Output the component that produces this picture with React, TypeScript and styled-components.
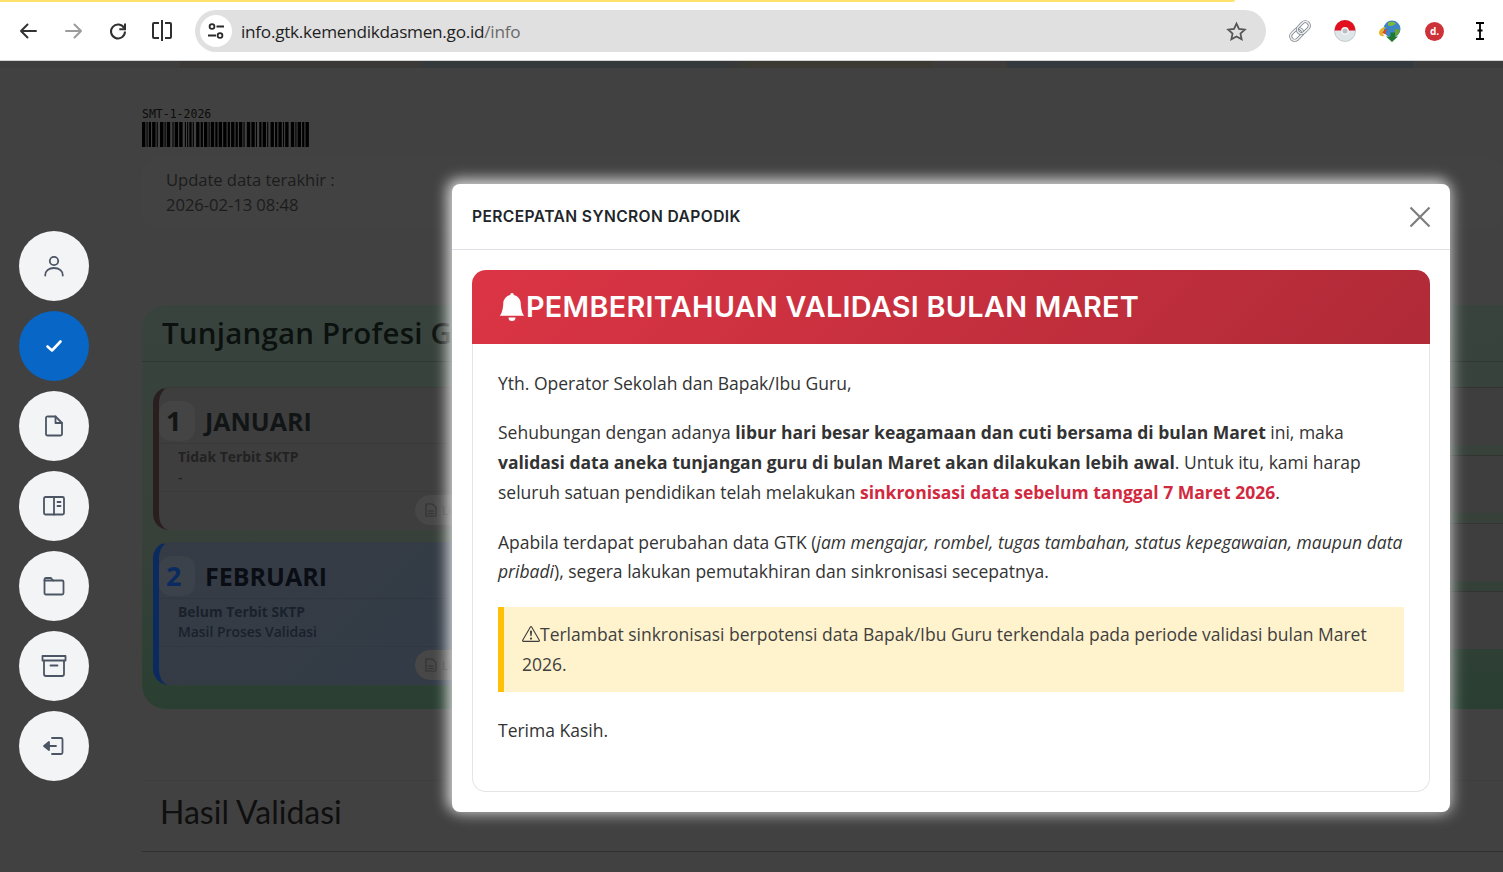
import React from "react";
import styled, { createGlobalStyle } from "styled-components";
import { BsBellFill, BsExclamationTriangle } from "react-icons/bs";

const Global = createGlobalStyle`
  html, body { margin: 0; padding: 0; background: #414141; }
  * { box-sizing: border-box; }
  body { font-family: "Open Sans", "Noto Sans", sans-serif; }
`;

const Page = styled.div`
  position: relative;
  width: 1503px;
  height: 872px;
  overflow: hidden;
  background: #414141;
  display: flex;
  flex-direction: column;
`;

const LoadBar = styled.div`
  position: absolute;
  left: 0;
  top: 0;
  width: 1235px;
  height: 2px;
  background: #ffe26b;
  border-radius: 0 0 4px 0;
`;

const Toolbar = styled.header`
  flex: none;
  height: 61px;
  background: #fff;
  border-bottom: 1px solid #d4d4d4;
  display: flex;
  align-items: center;
  padding: 2px 1px 0 6px;
`;

const NavSlot = styled.div`
  width: 44px;
  height: 40px;
  flex: none;
  display: flex;
  align-items: center;
  justify-content: center;
  &:nth-of-type(3) { margin-left: 2px; }
`;

const Omnibox = styled.div`
  flex: 1;
  height: 42px;
  margin-left: 11px;
  border-radius: 21px;
  background: #e0e0e0;
  display: flex;
  align-items: center;
  padding: 0 19px 0 5px;
`;

const TuneBadge = styled.div`
  width: 32px;
  height: 32px;
  flex: none;
  border-radius: 50%;
  background: #fff;
  display: flex;
  align-items: center;
  justify-content: center;
`;

const Url = styled.div`
  flex: 1;
  margin-left: 9px;
  font-size: 17.2px;
  letter-spacing: -0.27px;
  color: #1f1f1f;
  span { color: #6a6a6a; }
`;

const ExtensionRow = styled.div`
  display: flex;
  margin-left: 11px;
  flex: none;
`;

const ExtSlot = styled.div`
  width: 45px;
  height: 40px;
  display: flex;
  align-items: center;
  justify-content: center;
`;

const RedBadge = styled.div`
  width: 19px;
  height: 19px;
  border-radius: 50%;
  background: #cc3237;
  color: #fff;
  font-size: 10px;
  font-weight: 700;
  line-height: 19px;
  text-align: center;
`;

const PageStrip = styled.div`
  flex: none;
  height: 7px;
  background: linear-gradient(90deg, #3d3d3d 0 12%, #3a3938 12% 28%, #34393c 28% 48%, #3c3a33 50% 62%, #3d3c3b 62% 67%, #33393e 67% 94%, #3c3c3c 94% 100%);
`;

const Body = styled.div`
  flex: 1;
  display: flex;
  min-height: 0;
`;

const Sidebar = styled.nav`
  width: 142px;
  flex: none;
  display: flex;
  flex-direction: column;
  gap: 10px;
  padding: 163px 0 0 19px;
`;

const RoundButton = styled.div<{ $active?: boolean }>`
  width: 70px;
  height: 70px;
  border-radius: 50%;
  background: ${(p) => (p.$active ? "#0866c6" : "#f3f4f6")};
  color: ${(p) => (p.$active ? "#ffffff" : "#4b5563")};
  display: flex;
  align-items: center;
  justify-content: center;
`;

const Main = styled.main`
  flex: 1;
  min-width: 0;
  padding-top: 39px;
  display: flex;
  flex-direction: column;
`;

const BarcodeBlock = styled.div`
  height: 50px;
  display: flex;
  flex-direction: column;
`;

const BarcodeLabel = styled.div`
  font-family: "DejaVu Sans Mono", monospace;
  font-size: 11.5px;
  line-height: 15px;
  color: #0c0c0c;
`;

const UpdateCard = styled.div`
  height: 73px;
  padding: 10px 24px;
  border-radius: 16px;
  background: #424242;
  font-size: 16.6px;
  font-weight: 500;
  line-height: 25px;
  letter-spacing: -0.05px;
  color: #1c1c1c;
`;

const GreenPanel = styled.section`
  margin-top: 75px;
  height: 404px;
  border-radius: 24px 0 0 24px;
  background: linear-gradient(180deg, #39433e 0%, #374139 60%, #2a3f32 100%);
`;

const PanelHeader = styled.div`
  height: 57px;
  padding: 8px 20px 0;
  border-bottom: 1px solid #2f3532;
  font-size: 29.5px;
  font-weight: 600;
  line-height: 40px;
  letter-spacing: 0.2px;
  color: #0b110e;
  white-space: nowrap;
`;

const PanelGrid = styled.div`
  display: grid;
  grid-template-columns: 640px 1fr;
  gap: 10px;
  padding: 25px 0 0 11px;
  margin-right: -24px;
`;

const Column = styled.div<{ $gap: number }>`
  display: flex;
  flex-direction: column;
  gap: ${(p) => p.$gap}px;
`;

const MonthCard = styled.div<{ $tone: "done" | "active" }>`
  position: relative;
  height: 143px;
  border-radius: 16px;
  border-left: 6px solid ${(p) => (p.$tone === "done" ? "#2a1f1f" : "#0a2a60")};
  background: ${(p) => (p.$tone === "done" ? "#3e3e3e" : "linear-gradient(135deg, #363c45, #2f3a47)")};
  border-top: 1px solid ${(p) => (p.$tone === "done" ? "#383838" : "#333b45")};
`;

const MonthHead = styled.div`
  height: 56px;
  padding-top: 10px;
  display: flex;
  align-items: center;
  border-bottom: 1px solid rgba(0, 0, 0, 0.07);
`;

const NumberBadge = styled.div<{ $tone: "done" | "active" }>`
  width: 36px;
  height: 40px;
  margin-right: 10px;
  border-radius: 12px;
  background: rgba(255, 255, 255, 0.03);
  font-size: 27px;
  font-weight: 700;
  line-height: 40px;
  padding-left: 7px;
  color: ${(p) => (p.$tone === "done" ? "#141414" : "#0a2a60")};
`;

const MonthName = styled.div<{ $tone: "done" | "active" }>`
  font-size: 25px;
  font-weight: 700;
  color: ${(p) => (p.$tone === "done" ? "#111515" : "#0a0e14")};
`;

const MonthBody = styled.div<{ $tone: "done" | "active" }>`
  padding: 3px 0 0 19px;
  height: 44px;
  box-sizing: content-box;
  font-size: 13.9px;
  line-height: 20px;
  color: ${(p) => (p.$tone === "done" ? "#222" : "#1a212b")};
  border-bottom: 1px solid rgba(0, 0, 0, 0.05);
  b { font-weight: 700; display: block; }
  span { font-weight: 600; }
`;

const LinkPill = styled.div`
  position: absolute;
  left: 256px;
  bottom: 5px;
  display: flex;
  align-items: center;
  gap: 5px;
  width: 110px;
  height: 30px;
  padding-left: 10px;
  border-radius: 15px;
  background: #474747;
  font-size: 12px;
  color: #333;
`;

const SideCard = styled.div`
  height: 58px;
  border-radius: 12px;
  background: #3e3e3e;
  border-top: 1px solid #333;
`;

const ResultSection = styled.section`
  margin-top: 71px;
  border-top: 1px solid #3e3e3e;
`;

const ResultTitle = styled.h2`
  margin: 0;
  height: 71px;
  padding: 9px 18px 0;
  border-bottom: 1px solid #303030;
  font-family: "Lato", sans-serif;
  font-size: 32px;
  font-weight: 400;
  line-height: 44px;
  color: #0f0f0f;
`;

const Modal = styled.div`
  position: absolute;
  left: 452px;
  top: 184px;
  width: 998px;
  height: 628px;
  background: #fff;
  border-radius: 8px;
  box-shadow: -3px -3px 14px 2px rgba(255, 255, 255, 0.72), 3px 3px 16px 1px rgba(255, 255, 255, 0.24);
  display: flex;
  flex-direction: column;
`;

const ModalHeader = styled.div`
  flex: none;
  height: 66px;
  padding: 0 19px 0 20px;
  border-bottom: 1px solid #dee2e6;
  display: flex;
  align-items: center;
  justify-content: space-between;
`;

const ModalTitle = styled.h5`
  margin: 0;
  font-family: "Inter", sans-serif;
  font-size: 15.6px;
  font-weight: 600;
  letter-spacing: 0.4px;
  color: #212529;
`;

const ModalBody = styled.div`
  flex: 1;
  padding: 20px;
  display: flex;
`;

const Notice = styled.article`
  flex: 1;
  display: flex;
  flex-direction: column;
`;

const NoticeHead = styled.div`
  flex: none;
  height: 74px;
  padding: 0 26px 1px;
  border-radius: 14px 14px 0 0;
  display: flex;
  align-items: center;
  background: linear-gradient(135deg, #dc3545, #b02a37);
  color: #fff;
  font-family: "Inter", sans-serif;
  font-size: 28.8px;
  font-weight: 600;
  letter-spacing: 0.3px;
`;

const NoticeText = styled.div`
  flex: 1;
  padding: 24.5px 25px 0;
  border: 1px solid #e2e4e6;
  border-top: 0;
  border-radius: 0 0 14px 14px;
  font-size: 17.5px;
  line-height: 29.75px;
  color: #333;
  p { margin: 0 0 20px; }
  strong { font-weight: 700; }
  em { font-style: italic; }
`;

const Danger = styled.strong`
  color: #d1293f;
`;

const WarningBox = styled.div`
  margin: 0.5px 0 24px;
  padding: 13px 18px 12.5px;
  background: #fff3cd;
  border-left: 6px solid #ffc107;
  color: #3f3f3f;
`;

const bars = [3,1,1,1,2,1,3,1,1,2,3,1,1,1,3,2,1,1,3,1,3,2,1,1,1,1,2,1,1,2,3,1,2,1,3,1,1,1,3,1,2,1,3,1,3,1,2,1,3,1,2,1,3,1,1,2,3,1,3,1,1,2,2,1,3,1,1,2,3,1,2,1,3,1,1,1,3,2,3,1,1,1,3,1,2,1,3,1];

function Barcode() {
  let x = 0;
  const rects: React.ReactElement[] = [];
  bars.forEach((w, i) => {
    if (i % 2 === 0) rects.push(<rect key={i} x={x} y={0} width={w} height={25} fill="#000" />);
    x += w;
  });
  return (
    <svg width={168} height={25} viewBox={`0 0 ${x} 25`} preserveAspectRatio="none">
      {rects}
    </svg>
  );
}

const line = { fill: "none", stroke: "currentColor", strokeWidth: 1.8, strokeLinecap: "round", strokeLinejoin: "round" } as const;

const SideIcons = {
  user: (
    <svg width="24" height="24" viewBox="0 0 24 24" {...line}>
      <circle cx="12" cy="7" r="4.2" />
      <path d="M3.2 21.5c0-4.8 3.8-7.5 8.8-7.5s8.8 2.7 8.8 7.5" />
    </svg>
  ),
  check: (
    <svg width="20" height="20" viewBox="0 0 20 20" fill="none" stroke="currentColor" strokeWidth="2.6" strokeLinecap="round" strokeLinejoin="round">
      <path d="M3.5 10.5 8 14.5 16.5 5.5" />
    </svg>
  ),
  file: (
    <svg width="24" height="24" viewBox="0 0 24 24" {...line}>
      <path d="M6 2.5h7.5L20 9v11a1.5 1.5 0 0 1-1.5 1.5h-13A1.5 1.5 0 0 1 4 20V4a1.5 1.5 0 0 1 2-1.5Z" />
      <path d="M13.5 2.5V9H20" />
    </svg>
  ),
  book: (
    <svg width="24" height="24" viewBox="0 0 24 24" {...line}>
      <rect x="2" y="3" width="20" height="17.5" rx="1.5" />
      <path d="M12 3v17.5M15.5 8h3M15.5 12h3" />
    </svg>
  ),
  folder: (
    <svg width="24" height="24" viewBox="0 0 24 24" {...line}>
      <path d="M2.5 5.5A1.5 1.5 0 0 1 4 4h5l2 2.5h9A1.5 1.5 0 0 1 21.5 8v11a1.5 1.5 0 0 1-1.5 1.5H4A1.5 1.5 0 0 1 2.5 19Z" />
      <path d="M2.5 6.5h8.5" />
    </svg>
  ),
  archive: (
    <svg width="26" height="26" viewBox="0 0 26 26" {...line}>
      <path d="M1.5 3h23v4.5h-23ZM3 7.5V21a2 2 0 0 0 2 2h16a2 2 0 0 0 2-2V7.5M9.5 12.5h7" />
    </svg>
  ),
  logout: (
    <svg width="24" height="24" viewBox="0 0 24 24" {...line}>
      <path d="M10 4h9a1.5 1.5 0 0 1 1.5 1.5v13A1.5 1.5 0 0 1 19 20h-9" />
      <path d="M14 12H6" />
      <path d="M7 8v8l-5-4Z" fill="currentColor" />
    </svg>
  ),
};

const navStroke = { fill: "none", stroke: "currentColor", strokeWidth: 2, strokeLinecap: "round", strokeLinejoin: "round" } as const;

const Back = ({ color }: { color: string }) => (
  <svg width="20" height="20" viewBox="0 0 20 20" style={{ color }} {...navStroke}>
    <path d="M18 10H3M9.5 3.500 3 10l6.500 6.500" />
  </svg>
);
const Forward = ({ color }: { color: string }) => (
  <svg width="20" height="20" viewBox="0 0 20 20" style={{ color }} {...navStroke}>
    <path d="M2 10h15M10.500 3.500 17 10l-6.500 6.500" />
  </svg>
);

const Reload = () => (
  <svg width="20" height="20" viewBox="0 0 20 20" fill="none" stroke="#2f2f2f" strokeWidth="2">
    <path d="M16.200 7.200A7 7 0 1 0 17 10.500" />
    <path d="M17 2.500v5.700h-5.700" strokeLinejoin="miter" />
  </svg>
);

const Split = () => (
  <svg width="22" height="22" viewBox="0 0 22 22" fill="none" stroke="#2f2f2f" strokeWidth="2">
    <path d="M8 3H3a1 1 0 0 0-1 1v13a1 1 0 0 0 1 1h5M14 3h5a1 1 0 0 1 1 1v13a1 1 0 0 1-1 1h-5M11 0v21" />
  </svg>
);

const Tune = () => (
  <svg width="20" height="20" viewBox="0 0 20 20" fill="none" stroke="#2a2a2a" strokeWidth="1.800">
    <circle cx="6" cy="5.500" r="2.400" />
    <circle cx="14" cy="14.500" r="2.400" />
    <path d="M10.500 5.500H18M2 14.500h8" />
  </svg>
);

const Star = () => (
  <svg width="21" height="21" viewBox="0 0 24 24" fill="none" stroke="#555" strokeWidth="2" strokeLinejoin="miter">
    <path d="m12 3 2.800 6.100 6.700.8-5 4.500 1.400 6.600-5.900-3.400L6.100 21l1.400-6.600-5-4.500 6.700-.8Z" />
  </svg>
);

const ChainIcon = () => (
  <svg width="24" height="24" viewBox="0 0 24 24" fill="none">
    <g transform="rotate(-45 12 12)">
      <rect x="0.500" y="8" width="13.500" height="8" rx="4" stroke="#6f7a83" strokeWidth="3" />
      <rect x="0.500" y="8" width="13.500" height="8" rx="4" stroke="#eceeef" strokeWidth="1.700" />
      <rect x="10" y="8" width="13.500" height="8" rx="4" stroke="#6f7a83" strokeWidth="3" />
      <rect x="10" y="8" width="13.500" height="8" rx="4" stroke="#eceeef" strokeWidth="1.700" />
    </g>
  </svg>
);

const PokeBall = () => (
  <svg width="22" height="22" viewBox="0 0 22 22">
    <circle cx="11" cy="11" r="10.500" fill="#dfe6ea" stroke="#a9b1b6" strokeWidth="0.600" />
    <path d="M0.500 10.500a10.500 10.500 0 0 1 21 0Z" fill="#e20f1f" />
    <circle cx="11" cy="11" r="3.200" fill="#b9c0c4" stroke="#f4f4f4" strokeWidth="1.400" />
  </svg>
);

const IdmIcon = () => (
  <svg width="24" height="24" viewBox="0 0 24 24">
    <circle cx="14" cy="10" r="8.500" fill="#3d86c6" />
    <path d="M10 3.500c3-1.500 6-1 8 1-2 2-5 3-8 2Z" fill="#7fb83c" />
    <path d="M17 10c2 0 4 .5 5 1-.5 3-2 5-4 6-1-2-1.500-4-1-7Z" fill="#6aa332" />
    <path d="M1 14c0-3 3-6 7-6-2 2-3 4-3 6 0 2 1 3 2 3-3 1-6-.5-6-3Z" fill="#e5b62c" />
    <path d="M4.500 13.500c1-2 3-3.500 5-3.500-1.500 1.500-2 3-1.500 5-1.500 0-3-.5-3.500-1.500Z" fill="#d8482e" />
    <path d="M8 17.500h4.500v-4h4.500v4h3L14 23Z" fill="#1f7a2f" />
  </svg>
);

const IBeam = () => (
  <svg width="12" height="22" viewBox="0 0 12 22" fill="none" stroke="#000" strokeWidth="1.800">
    <path d="M2 3h8M2 19h8M6 3v16M3.500 10.500h5" />
  </svg>
);

const CloseIcon = () => (
  <svg width="22" height="22" viewBox="0 0 22 22" fill="none" stroke="#7d7d7d" strokeWidth="2.200">
    <path d="M1.500 1.500l19 19M20.500 1.500l-19 19" />
  </svg>
);

const SmallFile = () => (
  <svg width="12" height="14" viewBox="0 0 12 14" fill="none" stroke="#333" strokeWidth="1.200">
    <path d="M1 1h6.500L11 4.500V13H1Z" />
    <path d="M3 8h6M3 10.500h6" />
  </svg>
);

export default function App() {
  return (
    <Page>
      <Global />
      <Toolbar>
        <LoadBar />
        <NavSlot><Back color="#333" /></NavSlot>
        <NavSlot><Forward color="#9c9c9c" /></NavSlot>
        <NavSlot><Reload /></NavSlot>
        <NavSlot><Split /></NavSlot>
        <Omnibox>
          <TuneBadge><Tune /></TuneBadge>
          <Url>info.gtk.kemendikdasmen.go.id<span>/info</span></Url>
          <Star />
        </Omnibox>
        <ExtensionRow>
          <ExtSlot><ChainIcon /></ExtSlot>
          <ExtSlot><PokeBall /></ExtSlot>
          <ExtSlot><IdmIcon /></ExtSlot>
          <ExtSlot><RedBadge>d.</RedBadge></ExtSlot>
          <ExtSlot><IBeam /></ExtSlot>
        </ExtensionRow>
      </Toolbar>
      <PageStrip />
      <Body>
        <Sidebar>
          <RoundButton>{SideIcons.user}</RoundButton>
          <RoundButton $active>{SideIcons.check}</RoundButton>
          <RoundButton>{SideIcons.file}</RoundButton>
          <RoundButton>{SideIcons.book}</RoundButton>
          <RoundButton>{SideIcons.folder}</RoundButton>
          <RoundButton>{SideIcons.archive}</RoundButton>
          <RoundButton>{SideIcons.logout}</RoundButton>
        </Sidebar>
        <Main>
          <BarcodeBlock>
            <BarcodeLabel>SMT-1-2026</BarcodeLabel>
            <Barcode />
          </BarcodeBlock>
          <UpdateCard>
            Update data terakhir :<br />2026-02-13 08:48
          </UpdateCard>
          <GreenPanel>
            <PanelHeader>Tunjangan Profesi Guru</PanelHeader>
            <PanelGrid>
              <Column $gap={12}>
                <MonthCard $tone="done">
                  <MonthHead>
                    <NumberBadge $tone="done">1</NumberBadge>
                    <MonthName $tone="done">JANUARI</MonthName>
                  </MonthHead>
                  <MonthBody $tone="done">
                    <b>Tidak Terbit SKTP</b>
                    <span>-</span>
                  </MonthBody>
                  <LinkPill><SmallFile />Lihat SKTP</LinkPill>
                </MonthCard>
                <MonthCard $tone="active">
                  <MonthHead>
                    <NumberBadge $tone="active">2</NumberBadge>
                    <MonthName $tone="active">FEBRUARI</MonthName>
                  </MonthHead>
                  <MonthBody $tone="active">
                    <b>Belum Terbit SKTP</b>
                    <span>Masil Proses Validasi</span>
                  </MonthBody>
                  <LinkPill><SmallFile />Lihat SKTP</LinkPill>
                </MonthCard>
              </Column>
              <Column $gap={10}>
                <SideCard />
                <SideCard />
                <SideCard />
                <SideCard />
              </Column>
            </PanelGrid>
          </GreenPanel>
          <ResultSection>
            <ResultTitle>Hasil Validasi</ResultTitle>
          </ResultSection>
        </Main>
      </Body>
      <Modal>
        <ModalHeader>
          <ModalTitle>PERCEPATAN SYNCRON DAPODIK</ModalTitle>
          <CloseIcon />
        </ModalHeader>
        <ModalBody>
          <Notice>
            <NoticeHead>
              <BsBellFill size={28} />
              PEMBERITAHUAN VALIDASI BULAN MARET
            </NoticeHead>
            <NoticeText>
              <p>Yth. Operator Sekolah dan Bapak/Ibu Guru,</p>
              <p>
                Sehubungan dengan adanya <strong>libur hari besar keagamaan dan cuti bersama di bulan Maret</strong> ini, maka{" "}
                <strong>validasi data aneka tunjangan guru di bulan Maret akan dilakukan lebih awal</strong>. Untuk itu, kami harap seluruh satuan pendidikan telah melakukan{" "}
                <Danger>sinkronisasi data sebelum tanggal 7 Maret 2026</Danger>.
              </p>
              <p>
                Apabila terdapat perubahan data GTK (<em>jam mengajar, rombel, tugas tambahan, status kepegawaian, maupun data pribadi</em>), segera lakukan pemutakhiran dan sinkronisasi secepatnya.
              </p>
              <WarningBox>
                <BsExclamationTriangle size={18} style={{ verticalAlign: "-2px" }} />
                Terlambat sinkronisasi berpotensi data Bapak/Ibu Guru terkendala pada periode validasi bulan Maret 2026.
              </WarningBox>
              <p>Terima Kasih.</p>
            </NoticeText>
          </Notice>
        </ModalBody>
      </Modal>
    </Page>
  );
}
